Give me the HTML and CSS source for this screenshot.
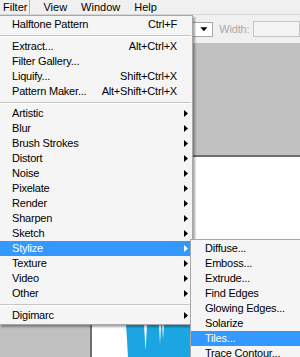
FILE: index.html
```html
<!DOCTYPE html>
<html>
<head>
<meta charset="utf-8">
<link rel="stylesheet" href="styles.css">
</head>
<body>
<div class="app">
  <div class="menubar">
    <span class="mb-item active">Filter</span>
    <span class="mb-item">View</span>
    <span class="mb-item">Window</span>
    <span class="mb-item">Help</span>
  </div>
  <div class="toolbar">
    <div class="select"><span class="caret"></span></div>
    <span class="lbl">Width:</span>
    <span class="field"></span>
  </div>
  <div class="workspace">
    <div class="doc">
      <svg class="art" width="208" height="200" viewBox="0 0 208 200">
        <polygon points="33,150 110,150 110,200 36,200" fill="#1ba6e3"/>
        <polygon points="52,168 55,168 53.6,194" fill="#ffffff"/>
        <polygon points="67,168 69,168 68,187" fill="#ffffff"/>
        <polygon points="70,168 72,168 71,182" fill="#e8f7fd"/>
      </svg>
    </div>
  </div>

  <div class="menu main">
    <div class="item"><span class="label">Halftone Pattern</span><span class="key">Ctrl+F</span><span class="arr"></span></div>
    <div class="sep"></div>
    <div class="item"><span class="label">Extract...</span><span class="key">Alt+Ctrl+X</span><span class="arr"></span></div>
    <div class="item"><span class="label">Filter Gallery...</span><span class="key"></span><span class="arr"></span></div>
    <div class="item"><span class="label">Liquify...</span><span class="key">Shift+Ctrl+X</span><span class="arr"></span></div>
    <div class="item"><span class="label">Pattern Maker...</span><span class="key">Alt+Shift+Ctrl+X</span><span class="arr"></span></div>
    <div class="sep"></div>
    <div class="item"><span class="label">Artistic</span><span class="key"></span><span class="arr"><i></i></span></div>
    <div class="item"><span class="label">Blur</span><span class="key"></span><span class="arr"><i></i></span></div>
    <div class="item"><span class="label">Brush Strokes</span><span class="key"></span><span class="arr"><i></i></span></div>
    <div class="item"><span class="label">Distort</span><span class="key"></span><span class="arr"><i></i></span></div>
    <div class="item"><span class="label">Noise</span><span class="key"></span><span class="arr"><i></i></span></div>
    <div class="item"><span class="label">Pixelate</span><span class="key"></span><span class="arr"><i></i></span></div>
    <div class="item"><span class="label">Render</span><span class="key"></span><span class="arr"><i></i></span></div>
    <div class="item"><span class="label">Sharpen</span><span class="key"></span><span class="arr"><i></i></span></div>
    <div class="item"><span class="label">Sketch</span><span class="key"></span><span class="arr"><i></i></span></div>
    <div class="item hl"><span class="label">Stylize</span><span class="key"></span><span class="arr"><i></i></span></div>
    <div class="item"><span class="label">Texture</span><span class="key"></span><span class="arr"><i></i></span></div>
    <div class="item"><span class="label">Video</span><span class="key"></span><span class="arr"><i></i></span></div>
    <div class="item"><span class="label">Other</span><span class="key"></span><span class="arr"><i></i></span></div>
    <div class="sep"></div>
    <div class="item"><span class="label">Digimarc</span><span class="key"></span><span class="arr"><i></i></span></div>
  </div>

  <div class="menu sub">
    <div class="item"><span class="label">Diffuse...</span></div>
    <div class="item"><span class="label">Emboss...</span></div>
    <div class="item"><span class="label">Extrude...</span></div>
    <div class="item"><span class="label">Find Edges</span></div>
    <div class="item"><span class="label">Glowing Edges...</span></div>
    <div class="item"><span class="label">Solarize</span></div>
    <div class="item hl"><span class="label">Tiles...</span></div>
    <div class="item"><span class="label">Trace Contour...</span></div>
  </div>
</div>
</body>
</html>
```

FILE: styles.css
```css
* { box-sizing: border-box; }
html, body { margin: 0; padding: 0; }
body {
  font-family: "Liberation Sans", Arial, sans-serif;
  font-size: 11px;
  letter-spacing: -0.2px;
  color: #000;
  background: #c0c0c0;
}
.app {
  position: relative;
  width: 300px;
  height: 357px;
  overflow: hidden;
  display: flex;
  flex-direction: column;
}
.menubar {
  height: 15px;
  background: #f0f0f0;
  display: flex;
  align-items: center;
  gap: 12px;
  padding-left: 2px;
  line-height: 14px;
}
.mb-item { padding: 0 1px; letter-spacing: 0; }
.mb-item.active { border-right: 1px solid #b4b4b4; padding-right: 2px; }
.toolbar {
  height: 30px;
  background: #f0f0f0;
  border-top: 1px solid #d6d6d6;
  display: flex;
  align-items: center;
  padding-left: 150px;
}
.select {
  width: 65px;
  height: 15px;
  border: 1px solid #a8a8a8;
  background: #fff;
  display: flex;
  align-items: center;
  justify-content: flex-end;
  padding-right: 5px;
}
.caret {
  width: 7px;
  height: 4px;
  background: #000;
  clip-path: polygon(0 0, 100% 0, 50% 100%);
}
.lbl { color: #a9a9a9; margin-left: 6px; }
.field {
  width: 48px;
  height: 16px;
  margin-left: 4px;
  border: 1px solid #c4c4c4;
  background: #f4f4f4;
}
.workspace {
  flex: 1;
  background: #c0c0c0;
  padding: 112px 0 0 90px;
  display: flex;
}
.doc {
  flex: 1;
  background: #fff;
  border-top: 2px solid #6e6e6e;
  border-left: 2px solid #6e6e6e;
  overflow: hidden;
}
.art { display: block; }

.menu {
  position: absolute;
  background: #f5f5f5;
  border: 1px solid #a7a7a7;
  box-shadow: 2px 2px 2px rgba(0, 0, 0, 0.35);
  padding: 1px 0;
}
.menu.main { left: -1px; top: 15px; width: 194px; }
.menu.sub { left: 190px; top: 239px; width: 130px; }
.item {
  height: 15px;
  line-height: 15px;
  display: flex;
  align-items: center;
  white-space: nowrap;
  padding-left: 12px;
}
.menu.sub .item { padding-left: 14px; }
.label { flex: 1; }
.key { text-align: right; }
.arr {
  width: 15px;
  height: 15px;
  display: flex;
  align-items: center;
  padding-left: 7px;
}
.arr i {
  display: block;
  width: 4px;
  height: 7px;
  background: #000;
  clip-path: polygon(0 0, 100% 50%, 0 100%);
}
.item.hl { background: #3399ff; color: #fff; }
.item.hl .arr i { background: #fff; }
.sep {
  height: 7px;
  padding-top: 3px;
}
.sep::before {
  content: "";
  display: block;
  border-top: 1px solid #c5c5c5;
  border-bottom: 1px solid #ffffff;
  margin-right: 1px;
}
```
